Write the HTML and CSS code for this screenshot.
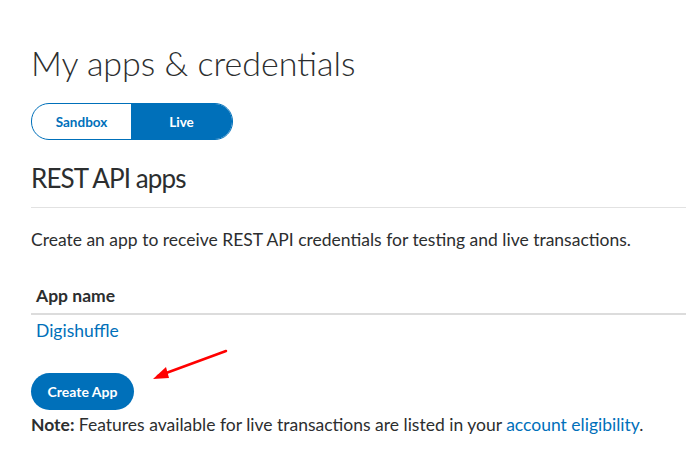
FILE: index.html
```html
<!DOCTYPE html>
<html>
<head>
<meta charset="utf-8">
<link rel="stylesheet" href="styles.css">
</head>
<body>
<main class="page">
  <h1 class="title">My apps &amp; credentials</h1>
  <div class="toggle">
    <span class="toggle-opt">Sandbox</span>
    <span class="toggle-opt active">Live</span>
  </div>
  <h2 class="section-title">REST API apps</h2>
  <p class="intro">Create an app to receive REST API credentials for testing and live transactions.</p>
  <div class="table">
    <div class="th">App name</div>
    <div class="td"><a class="link" href="#">Digishuffle</a></div>
  </div>
  <div class="actions">
    <button class="btn">Create App</button>
    <svg class="arrow" width="90" height="40" viewBox="0 0 90 40">
      <line x1="86" y1="3" x2="18" y2="28" stroke="#ff0000" stroke-width="2.5" stroke-linecap="round"/>
      <polygon points="13,31 26,19 29,30" fill="#ff0000"/>
    </svg>
  </div>
  <p class="note"><strong>Note:</strong> Features available for live transactions are listed in your <a class="link" href="#">account eligibility</a>.</p>
</main>
</body>
</html>
```
FILE: styles.css
```css
* { box-sizing: border-box; }
html, body { margin: 0; padding: 0; background: #fff; }
body { font-family: Lato, "Noto Sans", sans-serif; color: #2c2e2f; }
.page { padding: 41px 0 0 31px; }
.title {
  margin: 0;
  font-weight: 300;
  font-size: 34px;
  line-height: 44px;
  color: #2c2e2f;
}
.toggle {
  margin-top: 18px;
  display: flex;
  width: 202px;
  height: 37px;
  border: 1px solid #0070ba;
  border-radius: 18px;
  overflow: hidden;
}
.toggle-opt {
  flex: 0 0 99px;
  display: flex;
  align-items: center;
  justify-content: center;
  font-weight: 700;
  font-size: 13.5px;
  color: #0070ba;
}
.toggle-opt.active { flex: 1; background: #0070ba; color: #fff; }
.section-title {
  margin: 18px 0 0;
  font-weight: 400;
  font-size: 26px;
  line-height: 40px;
  letter-spacing: -0.9px;
  padding-bottom: 9px;
  border-bottom: 1px solid #e2e2e2;
  color: #2c2e2f;
}
.intro { margin: 21px 0 0; font-size: 17.5px; line-height: 22px; }
.table { margin-top: 35px; }
.th {
  padding: 0 0 7px 5px;
  font-size: 17.5px;
  font-weight: 700;
  line-height: 20px;
  border-bottom: 2px solid #dcdcdc;
}
.td { padding: 5px 0 0 5px; font-size: 17.5px; line-height: 22px; }
.link { color: #0070ba; text-decoration: none; }
.actions { position: relative; margin-top: 31px; height: 37px; }
.btn {
  width: 103px;
  height: 37px;
  border: none;
  border-radius: 19px;
  background: #0070ba;
  color: #fff;
  font-family: Lato, sans-serif;
  font-weight: 700;
  font-size: 14px;
  padding: 0;
}
.arrow { position: absolute; left: 109px; top: -25px; }
.note { margin: 4px 0 0; font-size: 17.5px; line-height: 22px; }
.note strong { font-weight: 700; }
```
